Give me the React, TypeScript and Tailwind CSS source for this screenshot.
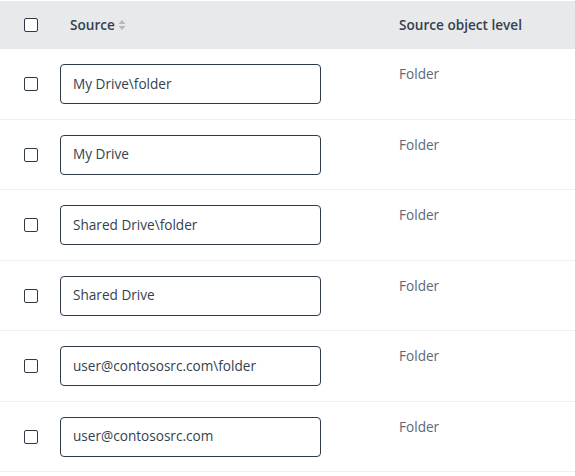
import React from 'react'

const rows = [
  'My Drive\\folder',
  'My Drive',
  'Shared Drive\\folder',
  'Shared Drive',
  'user@contososrc.com\\folder',
  'user@contososrc.com',
]

function Box() {
  return <span className="block w-[14px] h-[14px] rounded-[2px] border border-[#2f3a48] bg-white" />
}

function SortIcon() {
  return (
    <svg width="8" height="12" viewBox="0 0 8 12" className="ml-[3px]">
      <path d="M4 1 L7.5 5 H0.5 Z" fill="#b4b8bd" />
      <path d="M4 11 L7.5 7 H0.5 Z" fill="#b4b8bd" />
    </svg>
  )
}

export default function App() {
  return (
    <div className="w-[575px] h-[476px] overflow-hidden bg-white pt-px text-[13.6px] text-[#343f4f]" style={{ fontFamily: '"Open Sans", "Liberation Sans", sans-serif' }}>
      <div className="flex items-center h-[48px] bg-[#e8e9eb]">
        <div className="w-[60px] pl-[24px]"><Box /></div>
        <div className="w-[339px] pl-[10px] flex items-center font-semibold">
          Source<SortIcon />
        </div>
        <div className="font-semibold">Source object level</div>
      </div>
      {rows.map((r) => (
        <div key={r} className="flex h-[70.5px] border-b border-[#eeeff1]">
          <div className="w-[60px] pl-[24px] pt-[28px]"><Box /></div>
          <div className="w-[339px] pt-[15px]">
            <div className="w-[261px] h-[40px] rounded-[4px] border border-[#2f3a48] flex items-center pl-[12px]">{r}</div>
          </div>
          <div className="pt-[15px] text-[#5d6878]">Folder</div>
        </div>
      ))}
    </div>
  )
}
